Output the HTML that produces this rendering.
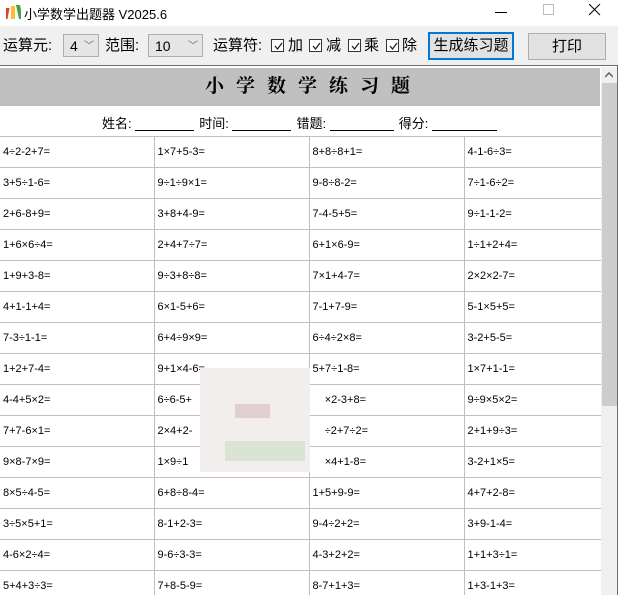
<!DOCTYPE html>
<html><head><meta charset="utf-8"><style>
*{margin:0;padding:0;box-sizing:border-box}
body{width:618px;height:595px;overflow:hidden;background:#f0f0f0;font-family:"Liberation Sans","Noto Sans CJK SC",sans-serif;position:relative}
.tb{position:absolute;left:0;top:0;width:618px;height:26px;background:#fff;font-size:13px}
.tb .t{position:absolute;left:24px;top:4px}
.tb svg{position:absolute}
.lb{position:absolute;top:37px;font-size:15px;color:#000;line-height:18px;white-space:nowrap}
.cb{position:absolute;top:39px;width:13px;height:13px;border:1px solid #333;background:#fff}
.cb svg{position:absolute;left:1px;top:1px}
.sel{position:absolute;top:34px;height:23px;border:1px solid #adadad;background:#e5e5e5;font-size:14px;padding:3px 0 0 6px}
.btn{position:absolute;height:27px;border:1px solid #adadad;background:#e1e1e1;font-size:15px;text-align:center;line-height:25px;white-space:nowrap}
.frame{position:absolute;left:0;top:65px;width:618px;height:530px;border-top:1px solid #6d6d6d;border-right:1px solid #6d6d6d;background:#fff;overflow:hidden}
.hdr{position:absolute;left:0;top:2px;width:600px;height:37px;background:#c0c0c0;padding-left:205px;font:bold 19px "Liberation Serif","Noto Serif CJK SC",serif;letter-spacing:12px;line-height:37px;white-space:nowrap}
.nm{position:absolute;left:0;top:39px;width:600px;height:31px;border-top:1px solid #bbb;font-size:13px;padding:7px 0 0 102px;white-space:nowrap}
.nm u{display:inline-block;width:59px;border-bottom:1px solid #000;height:12px;vertical-align:middle;margin-right:5px}
table{position:absolute;left:0;top:70px;border-collapse:collapse;width:601px;table-layout:fixed}
td{height:31px;border:1px solid #c0c0c0;border-left:none;font-size:11px;padding:0 0 0 3px;font-family:"WenQuanYi Zen Hei","Liberation Sans",sans-serif;overflow:hidden;white-space:nowrap}
td:last-child{border-right:none}
.sb{position:absolute;left:601px;top:1px;width:16px;height:529px;background:#f0f0f0}
.th{position:absolute;left:1px;top:16px;width:15px;height:323px;background:#cdcdcd}
</style></head><body>
<div class="tb">
<svg style="left:6px;top:5px" width="15" height="15"><rect x="0" y="3" width="4" height="11" fill="#e53935" transform="skewX(-10)"/><rect x="5" y="1" width="4" height="13" fill="#fbc02d"/><rect x="10" y="0" width="4" height="14" fill="#43a047" transform="skewX(12)"/></svg>
<div class="t">小学数学出题器 V2025.6</div>
<svg style="left:495px;top:12px" width="12" height="2"><rect width="12" height="1" fill="#000"/></svg>
<svg style="left:543px;top:4px" width="12" height="12"><rect x=".5" y=".5" width="10" height="10" fill="none" stroke="#bbb"/></svg>
<svg style="left:589px;top:4px" width="12" height="12"><path d="M0 0L11 11M11 0L0 11" stroke="#000"/></svg>
</div>
<div class="lb" style="left:3px">运算元:</div>
<div class="sel" style="left:63px;width:36px">4<span style="position:absolute;right:4px;top:2px;font-size:10px;color:#666">﹀</span></div>
<div class="lb" style="left:105px">范围:</div>
<div class="sel" style="left:148px;width:55px">10<span style="position:absolute;right:4px;top:2px;font-size:10px;color:#666">﹀</span></div>
<div class="lb" style="left:213px">运算符:</div>
<div class="cb" style="left:271px"><svg width="11" height="11"><path d="M2 5L4.5 8L9 2" stroke="#222" stroke-width="1.3" fill="none"/></svg></div>
<div class="lb" style="left:288px">加</div>
<div class="cb" style="left:309px"><svg width="11" height="11"><path d="M2 5L4.5 8L9 2" stroke="#222" stroke-width="1.3" fill="none"/></svg></div>
<div class="lb" style="left:326px">减</div>
<div class="cb" style="left:348px"><svg width="11" height="11"><path d="M2 5L4.5 8L9 2" stroke="#222" stroke-width="1.3" fill="none"/></svg></div>
<div class="lb" style="left:364px">乘</div>
<div class="cb" style="left:386px"><svg width="11" height="11"><path d="M2 5L4.5 8L9 2" stroke="#222" stroke-width="1.3" fill="none"/></svg></div>
<div class="lb" style="left:402px">除</div>
<div class="btn" style="left:428px;top:32px;width:86px;height:28px;border:2px solid #0078d7;line-height:24px">生成练习题</div>
<div class="btn" style="left:528px;top:33px;width:78px">打印</div>
<div class="frame">
<div class="hdr">小学数学练习题</div>
<div class="nm">姓名: <u></u>时间: <u></u>错题: <u style="width:64px"></u>得分: <u style="width:65px"></u></div>
<table>
<colgroup><col style="width:154px"><col style="width:155px"><col style="width:155px"><col style="width:137px"></colgroup>
<tr><td>4÷2-2+7=</td><td>1×7+5-3=</td><td>8+8÷8+1=</td><td>4-1-6÷3=</td></tr>
<tr><td>3+5÷1-6=</td><td>9÷1÷9×1=</td><td>9-8÷8-2=</td><td>7÷1-6÷2=</td></tr>
<tr><td>2+6-8+9=</td><td>3+8+4-9=</td><td>7-4-5+5=</td><td>9÷1-1-2=</td></tr>
<tr><td>1+6×6÷4=</td><td>2+4+7÷7=</td><td>6+1×6-9=</td><td>1÷1+2+4=</td></tr>
<tr><td>1+9+3-8=</td><td>9÷3+8÷8=</td><td>7×1+4-7=</td><td>2×2×2-7=</td></tr>
<tr><td>4+1-1+4=</td><td>6×1-5+6=</td><td>7-1+7-9=</td><td>5-1×5+5=</td></tr>
<tr><td>7-3÷1-1=</td><td>6+4÷9×9=</td><td>6÷4÷2×8=</td><td>3-2+5-5=</td></tr>
<tr><td>1+2+7-4=</td><td>9+1×4-6=</td><td>5+7÷1-8=</td><td>1×7+1-1=</td></tr>
<tr><td>4-4+5×2=</td><td>6÷6-5+</td><td>&nbsp;&nbsp;&nbsp;&nbsp;×2-3+8=</td><td>9÷9×5×2=</td></tr>
<tr><td>7+7-6×1=</td><td>2×4+2-</td><td>&nbsp;&nbsp;&nbsp;&nbsp;÷2+7÷2=</td><td>2+1+9÷3=</td></tr>
<tr><td>9×8-7×9=</td><td>1×9÷1</td><td>&nbsp;&nbsp;&nbsp;&nbsp;×4+1-8=</td><td>3-2+1×5=</td></tr>
<tr><td>8×5÷4-5=</td><td>6+8÷8-4=</td><td>1+5+9-9=</td><td>4+7+2-8=</td></tr>
<tr><td>3÷5×5+1=</td><td>8-1+2-3=</td><td>9-4÷2+2=</td><td>3+9-1-4=</td></tr>
<tr><td>4-6×2÷4=</td><td>9-6÷3-3=</td><td>4-3+2+2=</td><td>1+1+3÷1=</td></tr>
<tr><td>5+4+3÷3=</td><td>7+8-5-9=</td><td>8-7+1+3=</td><td>1+3-1+3=</td></tr>
</table>
<div style="position:absolute;left:200px;top:302px;width:110px;height:104px;background:#f3eeee"></div>
<div style="position:absolute;left:225px;top:375px;width:80px;height:20px;background:#d9e4d2"></div>
<div style="position:absolute;left:235px;top:338px;width:35px;height:14px;background:#e2cfcf"></div>
<div class="sb"><svg style="position:absolute;left:4px;top:5px" width="8" height="6"><path d="M0 5L4 1L8 5" stroke="#606060" stroke-width="1.5" fill="none"/></svg><div class="th"></div></div>
</div>
</body></html>
